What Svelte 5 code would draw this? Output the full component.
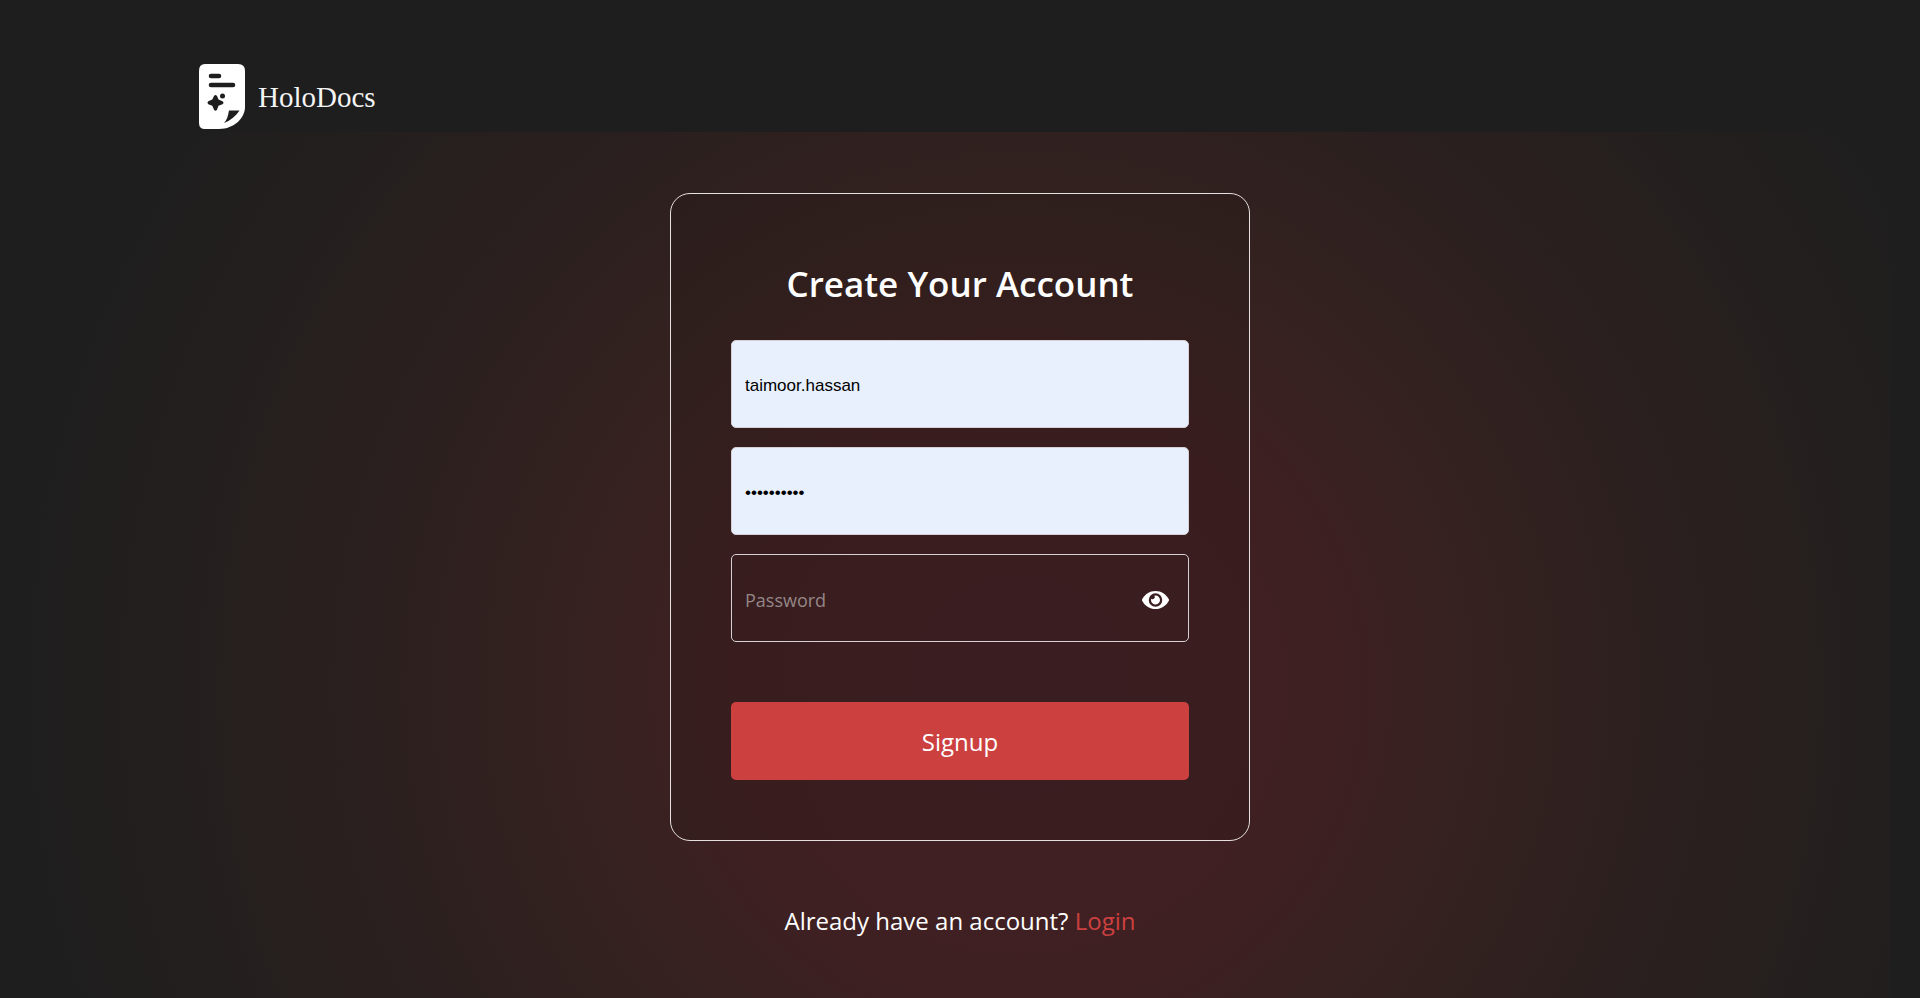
<script>
  let username = $state('taimoor.hassan');
  let password = $state('xxxxxxxxxx');
  let confirmation = $state('');
  let visible = $state(false);

  function submit(event) {
    event.preventDefault();
  }
</script>

<div class="page">
  <header>
    <a class="brand" href="/">
      <svg class="mark" viewBox="0 0 47 65" aria-hidden="true">
        <path
          fill="#fff"
          d="M6 0H39Q46 0 46 7V43C46 54 35 65 20 65H6Q0 65 0 59V7Q0 0 6 0Z"
        />
        <path
          d="M12 12H20M12 21H34"
          stroke="#1e1e1e"
          stroke-width="4.6"
          stroke-linecap="round"
        />
        <path
          fill="#1e1e1e"
          d="M15 32Q16.500 30 18 32L19.500 35.500L23.500 37.200Q25.500 38.700 23.500 40.200L19.500 41.800L18 45.800Q16.500 47.800 15 45.800L13.300 41.800L9.300 40.200Q7.500 38.700 9.300 37.200L13.300 35.500Z"
        />
        <circle cx="23.500" cy="32" r="2.500" fill="#1e1e1e" />
        <path fill="#1e1e1e" d="M30 46.500H40.500C37 52 31 57 25 59C28 56 29 52 30 46.500Z" />
      </svg>
      <span>HoloDocs</span>
    </a>
  </header>

  <main>
    <form class="card" onsubmit={submit}>
      <h1>Create Your Account</h1>
      <div class="fields">
        <input class="filled" type="text" aria-label="Username" bind:value={username} />
        <input class="filled" type="password" aria-label="Password" bind:value={password} />
        <div class="secret">
          <input
            type={visible ? 'text' : 'password'}
            aria-label="Confirm password"
            placeholder="Password"
            bind:value={confirmation}
          />
          <button
            class="eye"
            type="button"
            aria-label="Show password"
            onclick={() => (visible = !visible)}
          >
            <svg viewBox="0 0 576 512" aria-hidden="true">
              <path
                fill="currentColor"
                d="M572.520 241.400C518.290 135.590 410.930 64 288 64S57.680 135.640 3.480 241.410a32.350 32.350 0 0 0 0 29.190C57.710 376.410 165.070 448 288 448s230.320-71.640 284.520-177.410a32.350 32.350 0 0 0 0-29.190zM288 400a144 144 0 1 1 144-144 143.930 143.930 0 0 1-144 144zm0-240a95.310 95.310 0 0 0-25.310 3.790 47.850 47.850 0 0 1-66.900 66.900A95.780 95.780 0 1 0 288 160z"
              />
            </svg>
          </button>
        </div>
      </div>
      <button class="submit" type="submit">Signup</button>
    </form>
    <p>Already have an account? <a href="/login">Login</a></p>
  </main>
</div>

<style>
  :global(body) {
    margin: 0;
    background: #1e1e1e;
  }

  .page {
    min-height: 100vh;
    display: flex;
    flex-direction: column;
    color: #fff;
    font-family: 'Segoe UI', 'Open Sans', sans-serif;
  }

  header {
    display: flex;
    box-sizing: border-box;
    height: 132px;
    padding: 64px 199px 0;
  }

  .brand {
    display: flex;
    align-items: center;
    gap: 12px;
    height: 65px;
    color: #f4f4f4;
    font: 29px/32px 'Liberation Serif', serif;
    text-decoration: none;
  }

  .mark {
    width: 47px;
    height: 65px;
  }

  main {
    flex: 1;
    display: flex;
    flex-direction: column;
    align-items: center;
    margin-right: 30px;
    padding: 61px 0 0 30px;
    background: radial-gradient(
      circle 1020px at 54% 64%,
      #422023 0%,
      #3f2022 30%,
      #362220 43%,
      #2d201f 59%,
      #231f1e 84%,
      #1e1e1e 100%
    );
  }

  .card {
    box-sizing: border-box;
    width: 580px;
    max-width: 100%;
    padding: 60px;
    border: 1px solid #e6e0e0;
    border-radius: 20px;
    background: rgba(30, 20, 20, 0.2);
  }

  h1 {
    margin: 0 0 26px;
    font-size: 35px;
    font-weight: 600;
    line-height: 60px;
    text-align: center;
  }

  .fields {
    display: flex;
    flex-direction: column;
    gap: 19px;
  }

  input {
    box-sizing: border-box;
    width: 100%;
    height: 88px;
    padding: 4px 13px 0;
    border: 1px solid #d5d0d5;
    border-radius: 5px;
    background: transparent;
    color: #fff;
    font: 18px 'Segoe UI', 'Open Sans', sans-serif;
  }

  input::placeholder {
    color: #968687;
    opacity: 1;
  }

  .filled {
    background: #e8f0fe;
    color: #000;
    font: 17px 'Liberation Sans', Arial, sans-serif;
  }

  .secret {
    position: relative;
  }

  .eye {
    position: absolute;
    top: 0;
    right: 20px;
    height: 88px;
    padding: 4px 0 0;
    border: 0;
    background: none;
    color: #fff;
  }

  .eye svg {
    display: block;
    width: 27px;
    height: 24px;
  }

  .submit {
    display: block;
    width: 100%;
    height: 78px;
    margin-top: 60px;
    padding: 0;
    border: 0;
    border-radius: 5px;
    background: #cc4040;
    color: #fff;
    font: 24px 'Segoe UI', 'Open Sans', sans-serif;
  }

  p {
    margin: 60px 0;
    font-size: 24px;
    line-height: 40px;
  }

  p a {
    color: #cc4040;
    text-decoration: none;
  }
</style>
